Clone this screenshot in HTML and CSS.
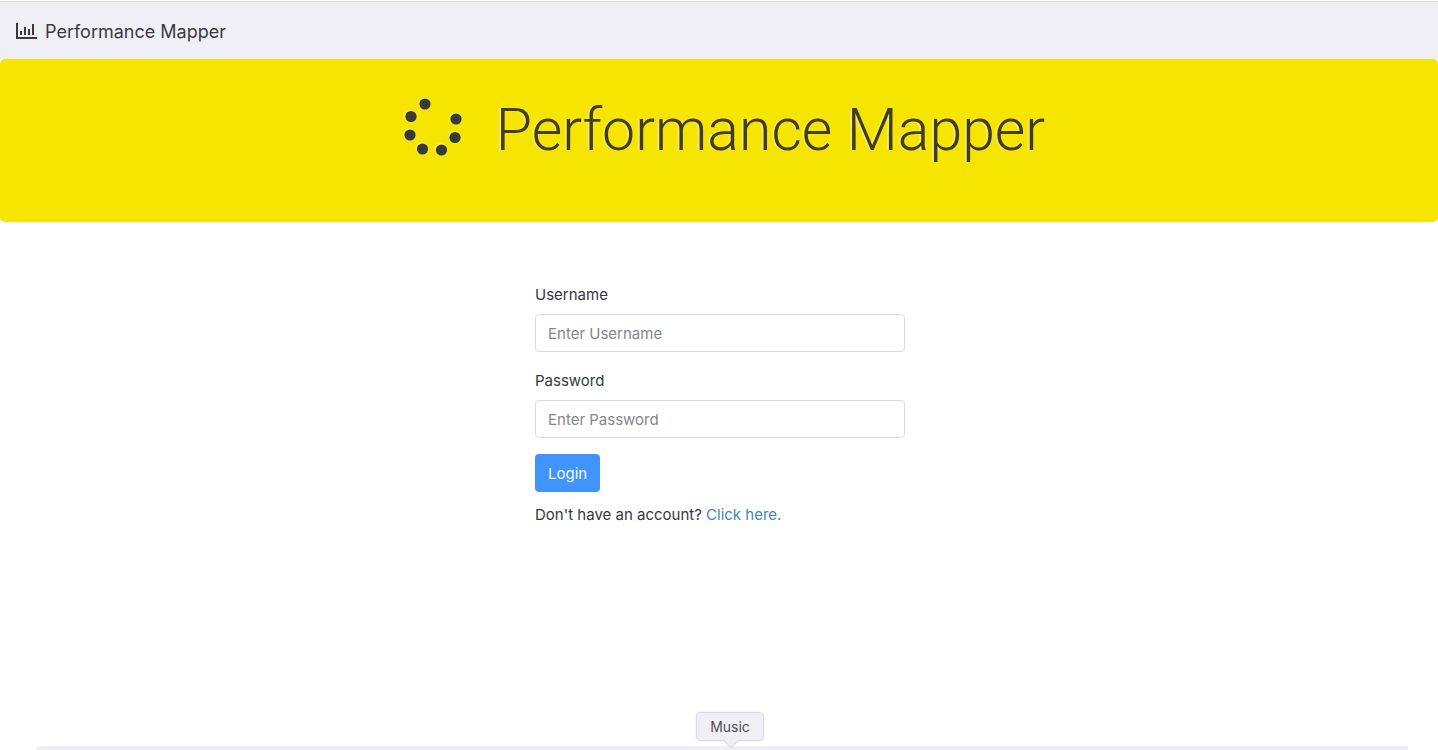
FILE: index.html
```html
<!DOCTYPE html>
<html lang="en">
<head>
<meta charset="utf-8">
<title>Performance Mapper</title>
<link rel="stylesheet" href="styles.css">
</head>
<body>
<header class="navbar">
  <a class="brand" href="#">
    <svg class="brand-icon" viewBox="0 0 22 18" aria-hidden="true">
      <path d="M1 0V15H21" fill="none" stroke="currentColor" stroke-width="2"/>
      <path d="M5 8V12M9 4V12M13 6V12M17 1V12" fill="none" stroke="currentColor" stroke-width="2"/>
    </svg>
    <span>Performance Mapper</span>
  </a>
</header>
<section class="hero">
  <svg class="spinner" viewBox="0 0 60 60" aria-hidden="true">
    <circle cx="22" cy="6" r="5.600"/>
    <circle cx="8" cy="18.500" r="5.600"/>
    <circle cx="7" cy="37" r="5.600"/>
    <circle cx="19.500" cy="51" r="5.600"/>
    <circle cx="38.500" cy="52" r="5.600"/>
    <circle cx="52" cy="39.500" r="5.600"/>
    <circle cx="53" cy="21" r="5.600"/>
  </svg>
  <h1 class="hero-title">Performance Mapper</h1>
</section>
<main class="content">
  <form class="login">
    <div class="field">
      <label for="username">Username</label>
      <input id="username" type="text" placeholder="Enter Username">
    </div>
    <div class="field">
      <label for="password">Password</label>
      <input id="password" type="password" placeholder="Enter Password">
    </div>
    <button class="submit" type="button">Login</button>
    <p class="signup">Don't have an account? <a href="#">Click here.</a></p>
  </form>
</main>
<footer class="dock">
  <div class="tooltip">Music</div>
</footer>
</body>
</html>
```
FILE: styles.css
```css
* {
  box-sizing: border-box;
}

body {
  margin: 0;
  min-height: 100vh;
  display: flex;
  flex-direction: column;
  background: #fff;
  color: #35373a;
  font: 15px/24px Inter, "Liberation Sans", sans-serif;
}

.navbar {
  display: flex;
  align-items: center;
  height: 58px;
  margin-top: 1px;
  padding-top: 3px;
  background: #f0eff5;
  border-top: 1px solid #dcdcdf;
}

.brand {
  display: flex;
  align-items: center;
  gap: 7px;
  margin-left: 16px;
  color: #3a3a3e;
  font-size: 18px;
  text-decoration: none;
}

.brand-icon {
  width: 22px;
  height: 18px;
}

.hero {
  display: flex;
  justify-content: center;
  gap: 33px;
  padding: 35px 16px 56px 26px;
  background: #f6e500;
  border-radius: 5px;
}

.spinner {
  width: 60px;
  height: 60px;
  margin-top: 4px;
  fill: #383a35;
  filter: drop-shadow(-1px -1px 1px #f4ec94);
}

.hero-title {
  margin: 0;
  color: #453e0c;
  font: 300 59px/72px Roboto, sans-serif;
  text-shadow: -2px 0 1px #efe783;
}

.content {
  flex: 1;
  padding: 60px 0 0 2px;
}

.login {
  width: 100%;
  max-width: 370px;
  margin: 0 auto;
}

.field {
  margin-bottom: 16px;
}

.field label {
  display: block;
  margin-bottom: 6px;
  line-height: 26px;
}

.field input {
  display: block;
  width: 100%;
  height: 38px;
  padding: 6px 12px;
  border: 1px solid #d9d9db;
  border-radius: 4px;
  background: #fff;
  color: inherit;
  font: inherit;
}

.field input::placeholder {
  color: #85868a;
  opacity: 1;
}

.submit {
  height: 38px;
  padding: 8px 13px 6px;
  border: 0;
  border-radius: 4px;
  background: #4094fb;
  color: #f5faff;
  font: inherit;
}

.signup {
  margin: 11px 0 0;
}

.signup a {
  color: #4284bf;
  text-decoration: none;
}

.dock {
  position: relative;
  height: 4px;
  margin: 0 30px 0 36px;
  background: #f0eff5;
  border-top-left-radius: 4px;
}

.tooltip {
  position: absolute;
  bottom: 9px;
  left: calc(50% + 8px);
  width: 68px;
  transform: translateX(-50%);
  border: 1px solid #dcdce0;
  border-radius: 5px;
  background: #f0eff5;
  color: #505055;
  font-size: 14px;
  line-height: 27px;
  text-align: center;
  box-shadow: 0 0 2px #dedee2;
}

.tooltip::after {
  content: "";
  position: absolute;
  bottom: -6px;
  left: 28px;
  width: 11px;
  height: 11px;
  transform: rotate(45deg);
  border: solid #dcdce0;
  border-width: 0 1px 1px 0;
  background: #f0eff5;
}
```
